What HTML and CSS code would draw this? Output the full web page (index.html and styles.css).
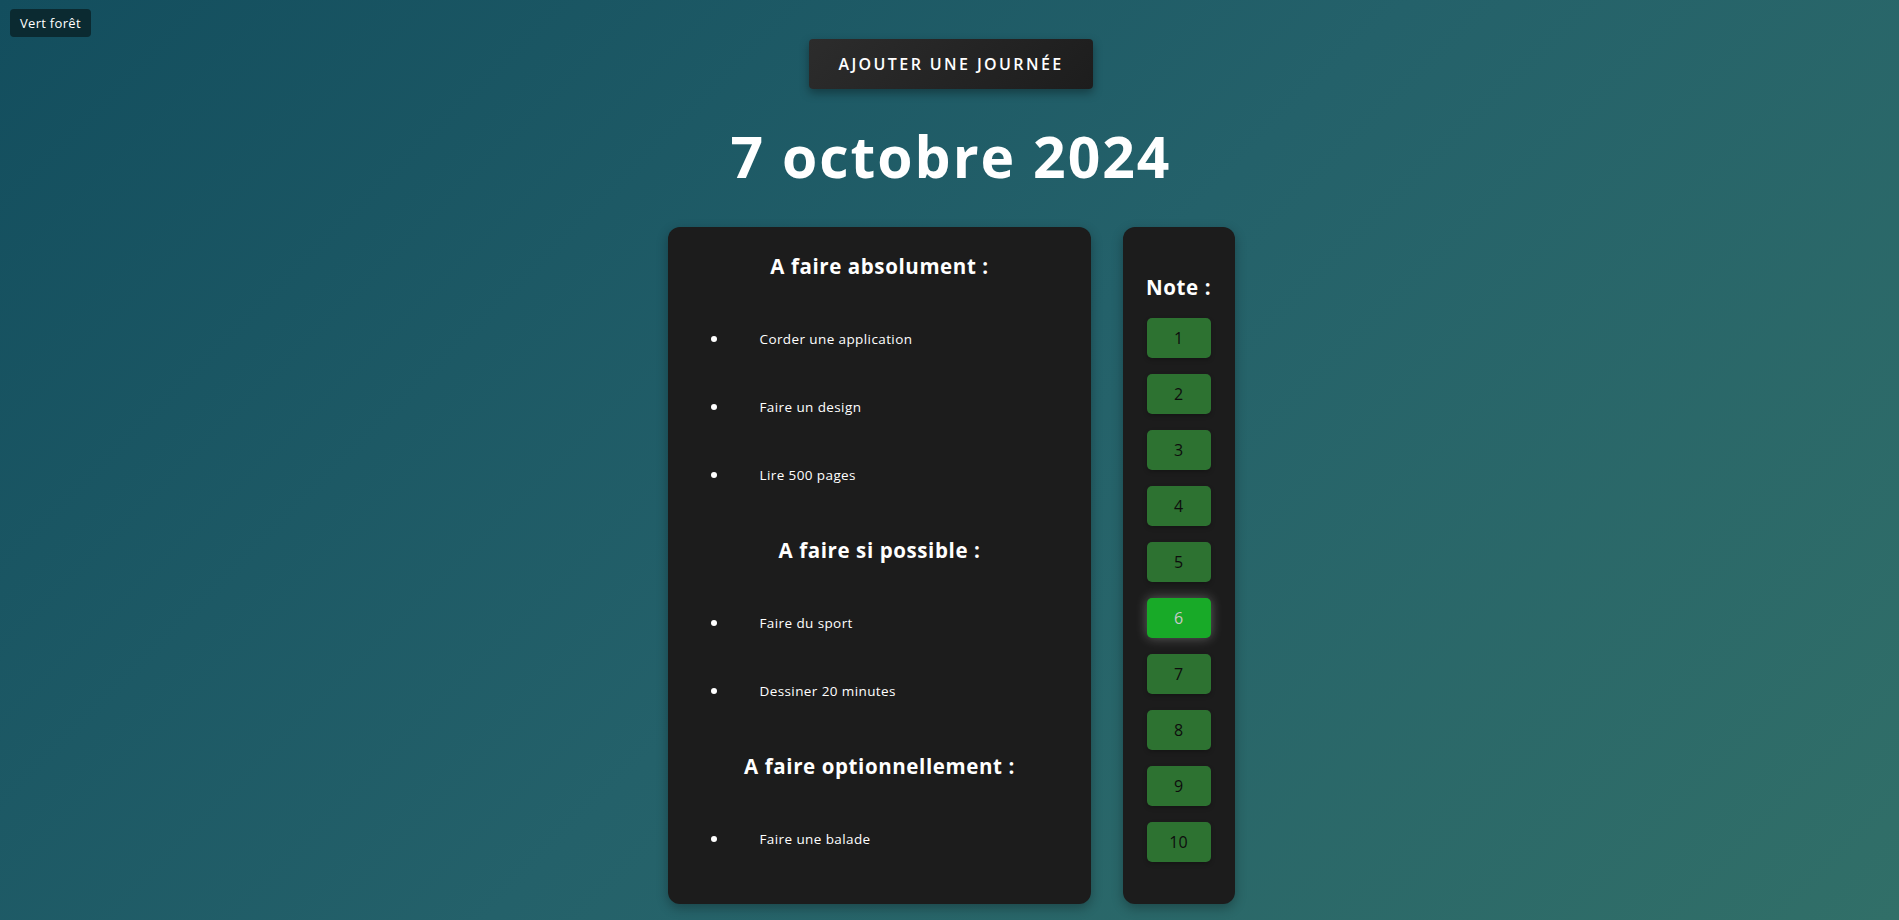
FILE: index.html
```html
<!DOCTYPE html>
<html lang="fr">
<head>
<meta charset="utf-8">
<title>Journée</title>
<link rel="stylesheet" href="styles.css">
</head>
<body>
<div class="theme-badge">Vert forêt</div>
<main class="page">
  <button class="add-btn">Ajouter une journée</button>
  <h1 class="date">7 octobre 2024</h1>
  <div class="board">
    <section class="card tasks">
      <h3 class="section-title">A faire absolument :</h3>
      <ul class="task-list">
        <li>Corder une application</li>
        <li>Faire un design</li>
        <li>Lire 500 pages</li>
      </ul>
      <h3 class="section-title">A faire si possible :</h3>
      <ul class="task-list">
        <li>Faire du sport</li>
        <li>Dessiner 20 minutes</li>
      </ul>
      <h3 class="section-title">A faire optionnellement :</h3>
      <ul class="task-list last">
        <li>Faire une balade</li>
      </ul>
    </section>
    <section class="card rating">
      <h3 class="rating-title">Note :</h3>
      <div class="rating-list">
        <button class="note">1</button>
        <button class="note">2</button>
        <button class="note">3</button>
        <button class="note">4</button>
        <button class="note">5</button>
        <button class="note active">6</button>
        <button class="note">7</button>
        <button class="note">8</button>
        <button class="note">9</button>
        <button class="note">10</button>
      </div>
    </section>
  </div>
</main>
</body>
</html>
```

FILE: styles.css
```css
* { box-sizing: border-box; }

html, body { height: 100%; }

body {
  margin: 0;
  min-height: 100vh;
  background: linear-gradient(135deg, #134e5e 0%, #24616a 50%, #316f68 100%);
  font-family: "Open Sans", "DejaVu Sans", sans-serif;
  color: #ffffff;
  overflow: hidden;
}

.theme-badge {
  position: fixed;
  top: 9px;
  left: 10px;
  height: 28px;
  padding: 0 10px;
  display: flex;
  align-items: center;
  background: #0b2a31;
  border-radius: 4px;
  font-size: 13px;
  font-weight: 500;
  letter-spacing: 0.3px;
  color: #ffffff;
}

.page {
  display: flex;
  flex-direction: column;
  align-items: center;
  padding-top: 39px;
  padding-left: 3px;
}

.add-btn {
  width: 284px;
  height: 50px;
  border: none;
  border-radius: 4px;
  background: linear-gradient(135deg, #2c2c2c 0%, #1d1d1d 100%);
  box-shadow: 0 4px 10px rgba(0, 0, 0, 0.35);
  color: #ffffff;
  font-family: inherit;
  font-size: 16px;
  font-weight: 600;
  letter-spacing: 2.4px;
  text-transform: uppercase;
}

.date {
  margin: 34px 0 37px;
  font-size: 57px;
  line-height: 67px;
  font-weight: 700;
  letter-spacing: 2px;
  color: #ffffff;
}

.board {
  display: flex;
  gap: 32px;
  align-items: stretch;
}

.card {
  background: #1c1c1c;
  border-radius: 12px;
  box-shadow: 0 4px 12px rgba(0, 0, 0, 0.3);
}

.tasks {
  width: 423px;
  padding: 27px 42px 28px 43px;
}

.section-title {
  margin: 0 0 27px;
  text-align: center;
  font-size: 20.5px;
  line-height: 24px;
  font-weight: 700;
  letter-spacing: 0.6px;
}

.task-list {
  list-style: none;
  margin: 0 0 29px;
  padding: 0;
}

.task-list.last { margin-bottom: 0; }

.task-list li {
  display: flex;
  align-items: center;
  height: 68px;
  font-size: 13.5px;
  line-height: 16px;
  letter-spacing: 0.4px;
}

.task-list li::before {
  content: "";
  width: 6px;
  height: 6px;
  border-radius: 50%;
  background: #ffffff;
  margin-right: 43px;
  flex-shrink: 0;
}

.rating {
  width: 112px;
  padding: 48px 24px 42px;
  display: flex;
  flex-direction: column;
  align-items: center;
}

.rating-title {
  margin: 0 0 19px;
  font-size: 20.5px;
  line-height: 24px;
  font-weight: 700;
  letter-spacing: 0.6px;
  white-space: nowrap;
}

.rating-list {
  display: flex;
  flex-direction: column;
  gap: 16px;
}

.note {
  width: 64px;
  height: 40px;
  border: none;
  border-radius: 5px;
  background: #2d7231;
  color: #0d0d0d;
  font-family: inherit;
  font-size: 16px;
  font-weight: 400;
  box-shadow: 0 2px 4px rgba(0, 0, 0, 0.25);
}

.note.active {
  background: #18aa28;
  color: #c9c9c9;
  box-shadow: 0 0 12px rgba(255, 255, 255, 0.3);
}
```
